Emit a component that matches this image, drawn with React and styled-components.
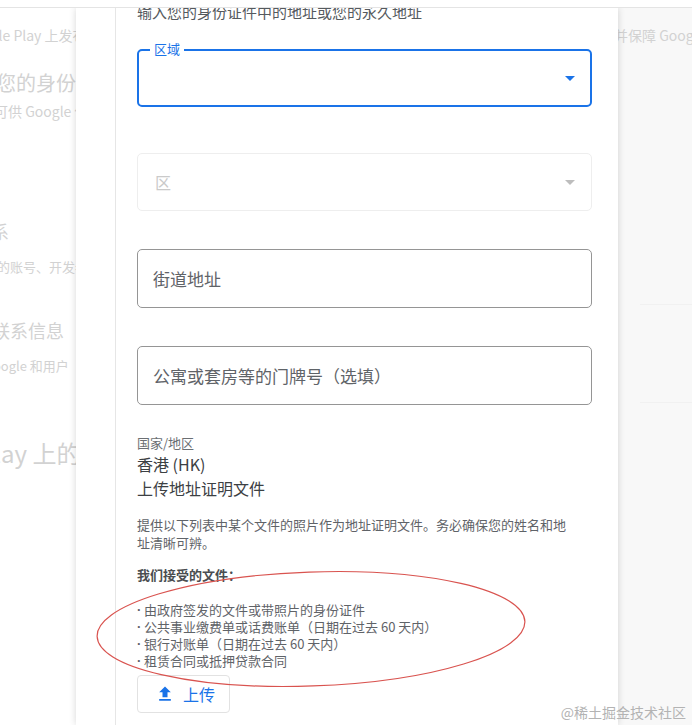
import React from "react";
import styled, { createGlobalStyle } from "styled-components";

const GlobalStyle = createGlobalStyle`
  html, body {
    margin: 0;
    padding: 0;
    background: #ffffff;
  }
  body {
    font-family: "Noto Sans CJK SC", "Noto Sans", Roboto, sans-serif;
    color: #3c4043;
  }
`;

const Page = styled.div`
  position: relative;
  width: 692px;
  height: 725px;
  display: flex;
  flex-direction: column;
  overflow: hidden;
  background: #ffffff;
`;

const TopBar = styled.div`
  height: 7px;
  flex: none;
  background: #ffffff;
  border-bottom: 1px solid #e4e4e4;
  position: relative;
  z-index: 2;
`;

const Stage = styled.div`
  flex: 1;
  min-height: 0;
  display: flex;
`;

const SideBg = styled.div`
  width: ${(p) => (p.$width ? `${p.$width}px` : "auto")};
  flex: ${(p) => (p.$width ? "none" : "1")};
  background: ${(p) => p.$bg};
  overflow: hidden;
  display: flex;
  flex-direction: column;
`;

const BgLine = styled.div`
  white-space: nowrap;
  font-size: ${(p) => p.$size}px;
  line-height: ${(p) => Math.round(p.$size * 1.4)}px;
  margin-top: ${(p) => p.$gap}px;
  margin-left: ${(p) => p.$shift}px;
  color: #d2d2d2;
  font-family: "Noto Sans CJK SC", Roboto, sans-serif;
`;

const FaintRule = styled.div`
  height: 1px;
  background: #f1f1f1;
  margin-top: ${(p) => p.$gap}px;
  margin-left: 22px;
`;

const Sheet = styled.div`
  width: 542px;
  flex: none;
  display: flex;
  background: #ffffff;
  position: relative;
  z-index: 1;
  box-shadow: 0 0 7px rgba(0, 0, 0, 0.16);
`;

const Gutter = styled.div`
  width: 39px;
  flex: none;
  border-right: 1px solid #e6e6e6;
`;

const Content = styled.div`
  flex: 1;
  padding: 0 26px 0 21px;
  overflow: hidden;
  display: flex;
  flex-direction: column;
`;

const Intro = styled.div`
  font-size: 15px;
  line-height: 22px;
  margin-top: -7px;
  color: #555a5e;
`;

const FieldBox = styled.div`
  position: relative;
  height: ${(p) => p.$height}px;
  margin-top: ${(p) => p.$gap}px;
  box-sizing: border-box;
  border: ${(p) =>
    p.$focused ? "2px solid #1a73e8" : p.$disabled ? "1px solid #eeeeee" : "1px solid #959595"};
  border-radius: 5px;
  display: flex;
  align-items: center;
  padding: 0 ${(p) => (p.$focused ? 8 : 9)}px 0 ${(p) => (p.$disabled ? 17 : 15)}px;
`;

const FieldText = styled.span`
  flex: 1;
  font-size: ${(p) => p.$size}px;
  color: ${(p) => (p.$muted ? "#cacaca" : "#5f6368")};
`;

const FloatLabel = styled.span`
  position: absolute;
  left: 11px;
  top: -10px;
  padding: 0 4px;
  background: #ffffff;
  font-size: 13px;
  line-height: 16px;
  color: #1a73e8;
`;

const Caret = ({ color }) => (
  <svg width="24" height="24" viewBox="0 0 24 24">
    <path d="M7 10l5 5 5-5z" fill={color} />
  </svg>
);

const Field = ({ label, text, focused, disabled, gap, height, size = 17 }) => (
  <FieldBox $focused={focused} $disabled={disabled} $gap={gap} $height={height}>
    {label && <FloatLabel>{label}</FloatLabel>}
    <FieldText $size={size} $muted={disabled}>
      {text}
    </FieldText>
    {(focused || disabled) && <Caret color={focused ? "#1a73e8" : "#bdbdbd"} />}
  </FieldBox>
);

const SmallLabel = styled.div`
  font-size: 13px;
  line-height: 18px;
  margin-top: 29px;
  color: #6b6f73;
`;

const ValueLine = styled.div`
  font-size: 16px;
  line-height: 24px;
  color: #3c4043;
`;

const Para = styled.p`
  margin: 16px 0 0;
  max-width: 436px;
  font-size: 13px;
  line-height: 18px;
  color: #5f6368;
`;

const ListTitle = styled.div`
  margin-top: 14px;
  font-size: 13px;
  line-height: 18px;
  font-weight: 700;
  color: #4a4d50;
`;

const DocList = styled.ul`
  list-style: none;
  margin: 17px 0 0;
  padding: 0;
`;

const DocItem = styled.li`
  display: flex;
  font-size: 13px;
  line-height: 17px;
  color: #5f6368;
  &::before {
    content: "·";
    width: 7px;
    flex: none;
    font-family: "Liberation Sans", sans-serif;
    font-weight: 700;
  }
`;

const UploadButton = styled.button`
  align-self: flex-start;
  margin-top: 6px;
  height: 38px;
  width: 93px;
  box-sizing: border-box;
  border: 1px solid #e2e2e2;
  border-radius: 4px;
  background: #ffffff;
  display: flex;
  align-items: center;
  gap: 8px;
  padding: 0 0 0 17px;
  font-family: inherit;
  font-size: 16px;
  color: #1a73e8;
`;

const UploadIcon = () => (
  <svg width="20" height="20" viewBox="0 0 24 24">
    <path d="M9 16h6v-6h4l-7-7-7 7h4zm-4 2h14v2H5z" fill="#1a73e8" />
  </svg>
);

const Annotation = styled.svg`
  position: absolute;
  left: 0;
  top: 0;
  pointer-events: none;
  z-index: 3;
`;

const Watermark = styled.div`
  position: absolute;
  right: 6px;
  bottom: 4px;
  z-index: 3;
  font-size: 14px;
  line-height: 18px;
  color: #b3b3b3;
  font-family: "Noto Sans CJK SC", sans-serif;
`;

const documents = [
  "由政府签发的文件或带照片的身份证件",
  "公共事业缴费单或话费账单（日期在过去 60 天内）",
  "银行对账单（日期在过去 60 天内）",
  "租赁合同或抵押贷款合同",
];

export default function App() {
  return (
    <Page>
      <GlobalStyle />
      <TopBar />
      <Stage>
        <SideBg $width={76} $bg="#ffffff">
          <BgLine $size={14} $gap={17} $shift={-36}>Google Play 上发布应用</BgLine>
          <BgLine $size={20} $gap={24} $shift={-44}>验证您的身份</BgLine>
          <BgLine $size={14} $gap={4} $shift={-6}>可供 Google 使用</BgLine>
          <BgLine $size={18} $gap={98} $shift={-27}>联系</BgLine>
          <BgLine $size={13} $gap={14} $shift={-3}>的账号、开发者</BgLine>
          <BgLine $size={18} $gap={42} $shift={-8}>联系信息</BgLine>
          <BgLine $size={13} $gap={14} $shift={-16}>Google 和用户</BgLine>
          <BgLine $size={24} $gap={61} $shift={-21}>Play 上的应用</BgLine>
        </SideBg>
        <Sheet>
          <Gutter />
          <Content>
            <Intro>输入您的身份证件中的地址或您的永久地址</Intro>
            <Field focused label="区域" gap={26} height={58} />
            <Field disabled text="区" gap={46} height={58} size={16} />
            <Field text="街道地址" gap={38} height={59} />
            <Field text="公寓或套房等的门牌号（选填）" gap={38} height={59} />
            <SmallLabel>国家/地区</SmallLabel>
            <ValueLine>香港 (HK)</ValueLine>
            <ValueLine>上传地址证明文件</ValueLine>
            <Para>
              提供以下列表中某个文件的照片作为地址证明文件。务必确保您的姓名和地址清晰可辨。
            </Para>
            <ListTitle>我们接受的文件：</ListTitle>
            <DocList>
              {documents.map((d) => (
                <DocItem key={d}>{d}</DocItem>
              ))}
            </DocList>
            <UploadButton>
              <UploadIcon />
              上传
            </UploadButton>
          </Content>
        </Sheet>
        <SideBg $bg="#f8f8f8">
          <BgLine $size={14} $gap={17} $shift={-4}>并保障 Google Play</BgLine>
          <FaintRule $gap={259} />
          <FaintRule $gap={97} />
        </SideBg>
      </Stage>
      <Annotation width="692" height="725" viewBox="0 0 692 725">
        <ellipse
          cx="311"
          cy="629"
          rx="214"
          ry="57"
          transform="rotate(-2 311 629)"
          fill="none"
          stroke="#d9534f"
          strokeWidth="1.2"
        />
      </Annotation>
      <Watermark>@稀土掘金技术社区</Watermark>
    </Page>
  );
}
